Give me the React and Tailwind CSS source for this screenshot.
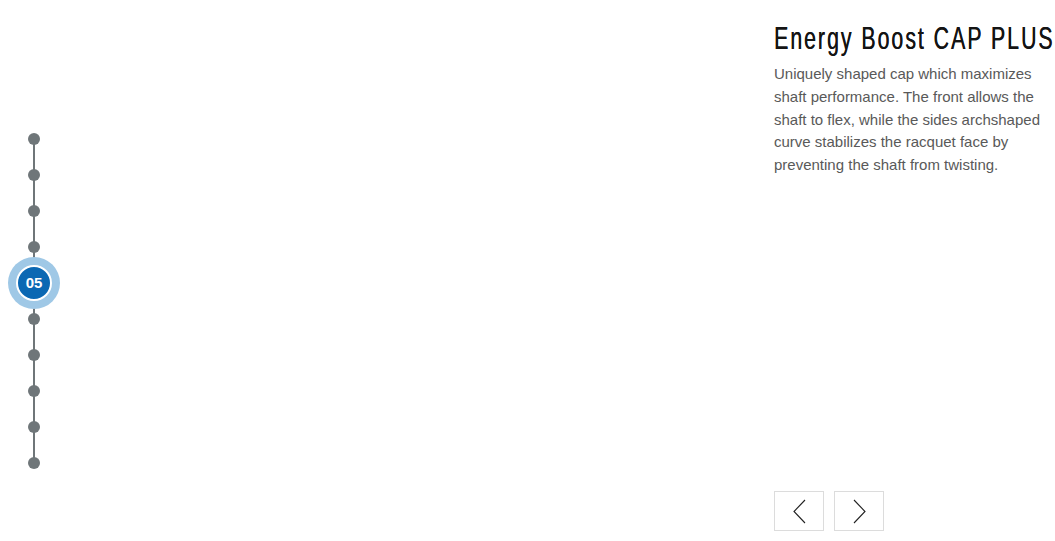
const steps = ['01', '02', '03', '04', '05', '06', '07', '08', '09', '10'];

function Chevron({ dir }) {
  return (
    <svg width="13" height="25" viewBox="0 0 13 25" fill="none" stroke="currentColor" strokeWidth="1.1">
      {dir === 'left' ? <polyline points="12,1 1,12.5 12,24" /> : <polyline points="1,1 12,12.5 1,24" />}
    </svg>
  );
}

export default function App() {
  const active = 4;

  return (
    <div className="w-[1055px] h-[541px] bg-white flex items-start overflow-hidden" style={{ fontFamily: '"Liberation Sans", sans-serif' }}>
      {/* Timeline */}
      <div className="w-[68px] pt-[121px] flex justify-center">
        <div className="relative flex flex-col">
          <div className="absolute left-1/2 -translate-x-1/2 top-[18px] bottom-[18px] w-[2px] bg-[#6f7679]" />
          {steps.map((s, i) => (
            <div key={s} className="relative h-[36px] w-[52px] flex items-center justify-center">
              {i === active ? (
                <div className="w-[52px] h-[52px] rounded-full bg-[#9fc8e6] flex items-center justify-center">
                  <div className="w-[36px] h-[36px] rounded-full bg-[#0b68b3] border-2 border-white flex items-center justify-center text-white text-[15px] font-bold">
                    {s}
                  </div>
                </div>
              ) : (
                <div className="w-[12px] h-[12px] rounded-full bg-[#6f7679]" />
              )}
            </div>
          ))}
        </div>
      </div>

      <div className="flex-1" />

      {/* Content */}
      <div className="w-[281px] h-[541px] flex flex-col pt-[20px] pb-[10px]">
        <h2 className="whitespace-nowrap text-[32px] leading-[36px] tracking-[3px] text-[#141414] origin-left scale-x-[0.665] [text-shadow:0.4px_0_0_#141414]">
          Energy Boost CAP PLUS
        </h2>
        <p className="mt-[7px] text-[15px] leading-[22.75px] text-[#595959] w-[285px]">
          Uniquely shaped cap which maximizes shaft performance. The front allows the shaft to flex, while the sides archshaped curve stabilizes the racquet face by preventing the shaft from twisting.
        </p>
        <div className="mt-auto flex gap-[10px]">
          <button className="w-[50px] h-[40px] border border-[#dcdcdc] flex items-center justify-center text-[#222]">
            <Chevron dir="left" />
          </button>
          <button className="w-[50px] h-[40px] border border-[#dcdcdc] flex items-center justify-center text-[#222]">
            <Chevron dir="right" />
          </button>
        </div>
      </div>
    </div>
  );
}
